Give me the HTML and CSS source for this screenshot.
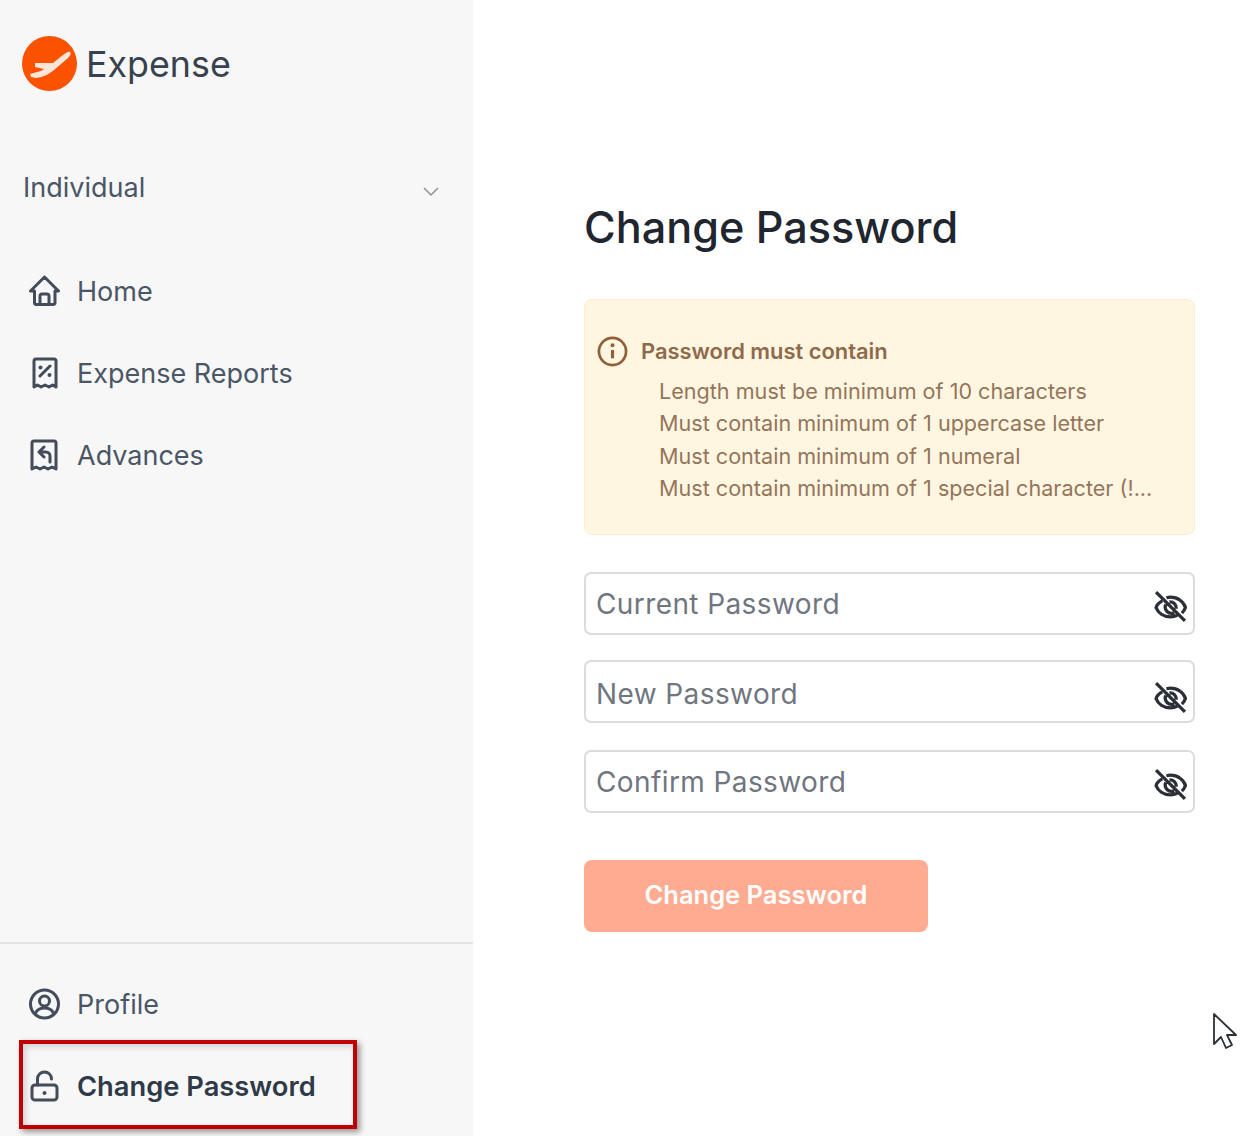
FILE: index.html

```html
<!DOCTYPE html>
<html lang="en">
<head>
    <meta charset="UTF-8">
    <meta name="viewport" content="width=device-width, initial-scale=1.0">
    <link rel="stylesheet" href="styles.css">
    <title>Change Password</title>
</head>
<body>

<div class="page">
    <aside class="sidebar">
        <div class="brand">
            <svg class="brand-logo" viewBox="0 0 55 55">
                <circle cx="27.5" cy="27.5" r="27.5" fill="#fb5200"/>
                <path d="M48 16c1.500 1 .5 3.500-2 6L32 34c-5 4-10 7-18 8l-5-1-1-3 11-3 3-2-9-2v-4h18l10-8c3-2.500 6-4 7-3z" fill="#fde6d8"/>
            </svg>
            <span class="brand-name">Expense</span>
        </div>

        <div class="org-select">
            <span>Individual</span>
            <svg viewBox="0 0 20 20"><path d="M3 7l7 7 7-7" fill="none" stroke="#8a9099" stroke-width="1.500"/></svg>
        </div>

        <nav class="nav">
            <a class="nav-item">
                <svg viewBox="0 0 32 32"><path d="M1.500 16L15.500 2l14 14h-3.500v12a1.500 1.500 0 0 1-1.500 1.500H7A1.500 1.500 0 0 1 5.500 28V16zM11 29v-8a2 2 0 0 1 2-2h5a2 2 0 0 1 2 2v8" class="ico"/></svg>
                <span>Home</span>
            </a>
            <a class="nav-item">
                <svg viewBox="0 0 32 32"><path d="M5 30V4a2 2 0 0 1 2-2h18a2 2 0 0 1 2 2v26l-3.500-2-3.500 2-4-2-4 2-3.500-2zM11 19l10-10" class="ico"/><circle cx="11.500" cy="10.500" r="2" fill="#434c5a"/><circle cx="20.500" cy="18" r="2" fill="#434c5a"/></svg>
                <span>Expense Reports</span>
            </a>
            <a class="nav-item">
                <svg viewBox="0 0 32 32"><path d="M3 30V4a2 2 0 0 1 2-2h20a2 2 0 0 1 2 2v26l-4-2-4 2-4-2-4 2-4-2zM15 8l-5 5 5 5M10 13h7a4 4 0 0 1 4 4v6" class="ico"/></svg>
                <span>Advances</span>
            </a>
        </nav>

        <div class="sidebar-foot">
            <a class="nav-item">
                <svg viewBox="0 0 32 32"><circle cx="15.500" cy="16" r="14" class="ico"/><circle cx="15.500" cy="13" r="5" class="ico"/><path d="M6.500 25c2-4 5-5 9-5s7 1 9 5" class="ico"/></svg>
                <span>Profile</span>
            </a>
            <a class="nav-item active">
                <svg viewBox="0 0 32 32"><rect x="3" y="15" width="25" height="15" rx="3" class="ico"/><path d="M8.500 15V9a7 7 0 0 1 14 0" class="ico"/><circle cx="15.500" cy="23" r="2" fill="#434c5a"/></svg>
                <span>Change Password</span>
            </a>
        </div>
    </aside>

    <main class="content">
        <h1 class="title">Change Password</h1>

        <div class="notice">
            <div class="notice-head">
                <svg viewBox="0 0 32 32"><circle cx="16" cy="16" r="14" fill="none" stroke="#8f5f38" stroke-width="2.800"/><path d="M16 14.500V23" fill="none" stroke="#8f5f38" stroke-width="3.200"/><circle cx="16" cy="9.500" r="2" fill="#8f5f38"/></svg>
                <strong>Password must contain</strong>
            </div>
            <ul class="notice-list">
                <li>Length must be minimum of 10 characters</li>
                <li>Must contain minimum of 1 uppercase letter</li>
                <li>Must contain minimum of 1 numeral</li>
                <li>Must contain minimum of 1 special character (!...</li>
            </ul>
        </div>

        <form class="form">
            <div class="field field-first">
                <input type="password" placeholder="Current Password">
                <svg class="eye" viewBox="0 0 32 32"><path d="M8 10.500C4.500 12.500 2.500 15 2 17c2 5 7 9 14 9 2.500 0 4.500-.5 6.500-1.500M12 7.500c1.300-.3 2.600-.5 4-.5 7 0 13 4.500 14.500 10-.6 2-2 4-3.500 5.500M11.500 14a6 6 0 0 0 8 8M15 11.500a6 6 0 0 1 6.500 6.500M2 2l28 28" fill="none" stroke="#2b3038" stroke-width="3.200"/></svg>
            </div>
            <div class="field field-second">
                <input type="password" placeholder="New Password">
                <svg class="eye" viewBox="0 0 32 32"><path d="M8 10.500C4.500 12.500 2.500 15 2 17c2 5 7 9 14 9 2.500 0 4.500-.5 6.500-1.500M12 7.500c1.300-.3 2.600-.5 4-.5 7 0 13 4.500 14.500 10-.6 2-2 4-3.500 5.500M11.500 14a6 6 0 0 0 8 8M15 11.500a6 6 0 0 1 6.500 6.500M2 2l28 28" fill="none" stroke="#2b3038" stroke-width="3.200"/></svg>
            </div>
            <div class="field">
                <input type="password" placeholder="Confirm Password">
                <svg class="eye" viewBox="0 0 32 32"><path d="M8 10.500C4.500 12.500 2.500 15 2 17c2 5 7 9 14 9 2.500 0 4.500-.5 6.500-1.500M12 7.500c1.300-.3 2.600-.5 4-.5 7 0 13 4.500 14.500 10-.6 2-2 4-3.500 5.500M11.500 14a6 6 0 0 0 8 8M15 11.500a6 6 0 0 1 6.500 6.500M2 2l28 28" fill="none" stroke="#2b3038" stroke-width="3.200"/></svg>
            </div>
            <button type="button" class="submit">Change Password</button>
        </form>
    </main>

    <div class="highlight"></div>
    <svg class="cursor" viewBox="0 0 26 38"><path d="M2 2v30l7-7 5 11 6-3-5-10h9z" fill="#fff" stroke="#2b3038" stroke-width="1.800" stroke-linejoin="round"/></svg>
</div>

</body>
</html>
```

FILE: styles.css

```css
* {
    box-sizing: border-box;
}
body {
    margin: 0;
    font-family: Inter, "Liberation Sans", sans-serif;
    color: #3f4a5a;
    background: #fff;
}
.page {
    position: relative;
    display: flex;
    width: 1250px;
    height: 1136px;
    overflow: hidden;
}
.ico {
    fill: none;
    stroke: #434c5a;
    stroke-width: 3;
    stroke-linejoin: round;
    stroke-linecap: round;
}

.sidebar {
    display: flex;
    flex-direction: column;
    width: 473px;
    height: 100%;
    background: #f7f7f7;
}
.brand {
    display: flex;
    align-items: center;
    gap: 9px;
    padding: 36px 0 0 22px;
}
.brand-logo {
    width: 55px;
    height: 55px;
}
.brand-name {
    font-size: 35.800px;
    color: #38424f;
}
.org-select {
    display: flex;
    justify-content: space-between;
    align-items: center;
    margin-top: 79px;
    padding: 0 32px 0 23px;
    font-size: 27px;
    line-height: 36px;
    color: #4a5666;
}
.org-select svg {
    width: 20px;
    height: 20px;
    margin-top: 6px;
}
.nav {
    display: flex;
    flex-direction: column;
    gap: 46px;
    margin-top: 67px;
}
.nav-item {
    display: flex;
    align-items: center;
    gap: 16px;
    height: 36px;
    padding-left: 29px;
    font-size: 27px;
    color: #4a5666;
}
.nav-item svg {
    width: 32px;
    height: 32px;
}
.nav-item.active {
    font-weight: 600;
    font-size: 27.300px;
    color: #2f3a49;
}
.sidebar-foot {
    display: flex;
    flex-direction: column;
    gap: 46px;
    margin-top: auto;
    padding: 42px 0 32px;
    border-top: 2px solid #e2e2e2;
}

.content {
    flex: 1;
    padding: 197px 0 0 111px;
}
.title {
    margin: 0;
    font-size: 43.200px;
    font-weight: 500;
    line-height: 60px;
    color: #1f2630;
}
.notice {
    width: 611px;
    height: 236px;
    margin-top: 42px;
    padding: 34px 12px 0;
    background: #fff6e2;
    border: 1px solid #fcecd0;
    border-radius: 8px;
    color: #8f6a4a;
}
.notice-head {
    display: flex;
    align-items: center;
    gap: 13px;
    font-size: 21.900px;
    line-height: 34px;
}
.notice-head svg {
    width: 31px;
    height: 31px;
}
.notice-head strong {
    font-weight: 600;
}
.notice-list {
    margin: 7px 0 0;
    padding: 0 0 0 62px;
    list-style: none;
    font-size: 21.600px;
    line-height: 32.300px;
    color: #94755a;
}

.form {
    width: 611px;
    margin-top: 37px;
}
.field {
    position: relative;
    height: 63px;
    margin-bottom: 27px;
}
.field-first {
    margin-bottom: 25px;
}
.field input {
    width: 100%;
    height: 100%;
    padding: 0 50px 0 10px;
    border: 2px solid #dcdcdc;
    border-radius: 7px;
    font-family: inherit;
    font-size: 28px;
    letter-spacing: .4px;
    background: #fff;
    outline: none;
}
.field-second input {
    padding-top: 4px;
}
.field input::placeholder {
    color: #6f7680;
    opacity: 1;
}
.eye {
    position: absolute;
    top: 18px;
    right: 8px;
    width: 33px;
    height: 33px;
}
.field-second .eye {
    top: 21px;
}
.submit {
    display: block;
    width: 344px;
    height: 72px;
    margin-top: 47px;
    padding: 0 0 4px;
    border: none;
    border-radius: 8px;
    background: #ffab91;
    color: #fff;
    font-family: inherit;
    font-size: 25.500px;
    font-weight: 600;
}

/* annotation drawn on top of the shot */
.highlight {
    position: absolute;
    left: 19px;
    top: 1040px;
    width: 338px;
    height: 89px;
    border: 4px solid #c00000;
    box-shadow: 3px 3px 6px rgba(0, 0, 0, .4), inset 3px 3px 6px rgba(0, 0, 0, .15);
}
.cursor {
    position: absolute;
    left: 1212px;
    top: 1012px;
    width: 26px;
    height: 38px;
}
```
